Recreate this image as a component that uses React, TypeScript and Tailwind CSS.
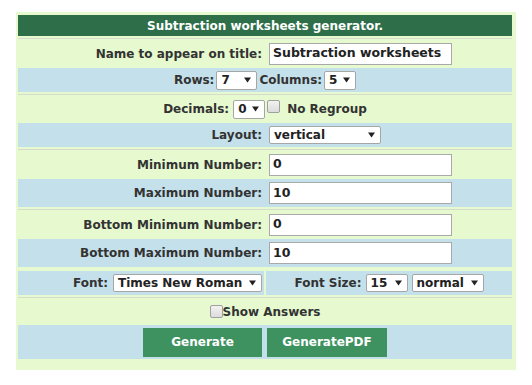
import React, {ReactNode} from 'react';

const font = "font-['DejaVu_Sans',Verdana,sans-serif]";

function Arrow() {
  return (
    <svg width="7" height="6" viewBox="0 0 7 6" className="shrink-0">
      <path d="M0 0.5 L7 0.5 L3.5 5.5 Z" fill="#222" />
    </svg>
  );
}

interface SelectProps {
  value: string;
  className: string;
}
function FakeSelect({value, className}: SelectProps) {
  return (
    <span
      className={`inline-flex items-center justify-between whitespace-nowrap rounded-[2px] border border-[#a6a6a6] bg-white pl-[4px] pr-[5px] text-[#222] ${className}`}
    >
      <span className="leading-none">{value}</span>
      <Arrow />
    </span>
  );
}

function Checkbox() {
  return (
    <span className="inline-block h-[13px] w-[13px] shrink-0 rounded-[2px] border border-[#a0a0a0] bg-gradient-to-b from-[#f2f2f2] to-[#dcdcdc]" />
  );
}

function TextBox({value}: {value: string}) {
  return (
    <span className="flex h-[22px] w-[183px] items-center border border-[#a9a9a9] bg-white px-[3px] text-[12.5px] text-[#222]">
      {value}
    </span>
  );
}

function Sep() {
  return (
    <div className="pt-[2px]">
      <div className="h-px bg-[#d5dccd]" />
    </div>
  );
}

interface FieldRowProps {
  label: string;
  children: ReactNode;
  blue?: boolean;
  height: string;
}
function FieldRow({label, children, blue, height}: FieldRowProps) {
  return (
    <div
      className={`grid grid-cols-[246px_246px] gap-x-[2px] ${height} ${blue ? 'bg-[#c4e0ea]' : ''}`}
    >
      <div className="flex items-center justify-end pr-[2px]">{label}</div>
      <div className="flex items-center pl-[3px]">{children}</div>
    </div>
  );
}

export default function App() {
  return (
    <div className={`${font} pt-[12px] pl-[16px] text-[12px] font-bold text-[#333]`}>
      <div className="w-[500px] bg-[#e6f9cf] pt-[3px] pr-[4px] pb-[11px] pl-[2px]">
        <div className="flex h-[21px] items-center justify-center bg-[#2e6f4a] text-white">
          Subtraction worksheets generator.
        </div>
        <Sep />
        <FieldRow label="Name to appear on title:" height="h-[29px]">
          <TextBox value="Subtraction worksheets" />
        </FieldRow>
        <div className="flex h-[24px] items-center justify-center gap-[2px] bg-[#c4e0ea]">
          <span>Rows:</span>
          <FakeSelect value="7" className="h-[19px] w-[41px]" />
          <span>Columns:</span>
          <FakeSelect value="5" className="h-[19px] w-[32px]" />
        </div>
        <Sep />
        <div className="flex h-[28px] items-center justify-center">
          <span className="mr-[4px]">Decimals:</span>
          <FakeSelect value="0" className="h-[19px] w-[32px]" />
          <span className="ml-[2px] mr-[7px]">
            <Checkbox />
          </span>
          <span>No Regroup</span>
        </div>
        <FieldRow label="Layout:" blue height="h-[24px]">
          <FakeSelect value="vertical" className="h-[18px] w-[112px]" />
        </FieldRow>
        <Sep />
        <FieldRow label="Minimum Number:" height="h-[29px]">
          <TextBox value="0" />
        </FieldRow>
        <FieldRow label="Maximum Number:" blue height="h-[28px]">
          <TextBox value="10" />
        </FieldRow>
        <Sep />
        <FieldRow label="Bottom Minimum Number:" height="h-[29px]">
          <TextBox value="0" />
        </FieldRow>
        <FieldRow label="Bottom Maximum Number:" blue height="h-[28px]">
          <TextBox value="10" />
        </FieldRow>
        <div className="mt-[4px] grid h-[24px] grid-cols-[246px_246px] gap-x-[2px]">
          <div className="flex items-center justify-end gap-[5px] bg-[#c4e0ea] pr-[2px]">
            <span>Font:</span>
            <FakeSelect value="Times New Roman" className="h-[18px] w-[149px]" />
          </div>
          <div className="flex items-center justify-center gap-[4px] bg-[#c4e0ea]">
            <span>Font Size:</span>
            <FakeSelect value="15" className="h-[18px] w-[42px]" />
            <FakeSelect value="normal" className="h-[18px] w-[72px]" />
          </div>
        </div>
        <Sep />
        <div className="flex h-[27px] items-center justify-center">
          <Checkbox />
          <span>Show Answers</span>
        </div>
        <div className="flex h-[34px] items-center justify-center gap-[5px] bg-[#c4e0ea]">
          <button className="h-[29px] w-[119px] bg-[#3d9260] font-bold text-white">
            Generate
          </button>
          <button className="h-[29px] w-[120px] bg-[#3d9260] font-bold text-white">
            GeneratePDF
          </button>
        </div>
      </div>
    </div>
  );
}
